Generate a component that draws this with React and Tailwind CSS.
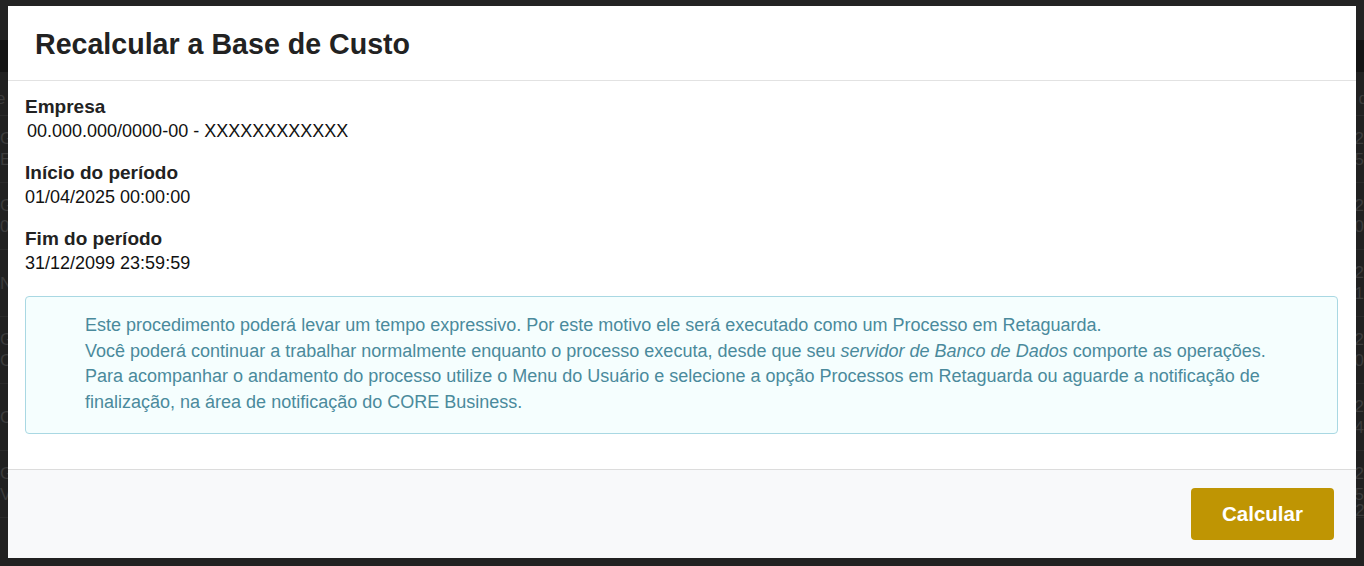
const rows = [
  { a: 'G', b: 'E', r1: '2', r2: '5' },
  { a: 'G', b: '0/', r1: '2', r2: '0' },
  { a: 'N', b: '', r1: '2', r2: '1' },
  { a: 'G', b: 'C', r1: '2', r2: '0' },
  { a: 'C', b: '', r1: '2', r2: '4' },
  { a: 'G', b: 'V', r1: '2', r2: '5' },
];

function BackgroundPage() {
  return (
    <div className="flex flex-col h-full text-[#3c3c3c] text-[17px]">
      <div className="h-[40px] bg-[#232323]" />
      <div className="h-[32px] bg-[#141414]" />
      <div className="h-[44px] flex items-end justify-between pb-1 border-b border-[#2c2c2c]">
        <span className="-ml-1">e</span>
        <span className="-mr-1">d</span>
      </div>
      {rows.map((r, i) => (
        <div key={i} className="h-[67px] flex justify-between items-center border-b border-[#2a2a2a] leading-[21px]">
          <div className="flex flex-col">
            <span>{r.a}</span>
            <span>{r.b}</span>
          </div>
          <div className="flex flex-col">
            <span>{r.r1}</span>
            <span>{r.r2}</span>
          </div>
        </div>
      ))}
      <div className="relative h-[20px]">
        <span className="absolute left-[145px] top-[-20px]">01/04/2025</span>
        <span className="absolute left-[275px] top-[-20px]">31/12/2099</span>
        <span className="absolute left-[1075px] top-[-20px]">17/04/2025</span>
        <span className="absolute left-[1308px] top-[-20px]">17/04/2</span>
      </div>
    </div>
  );
}

function Field({ label, value, indent }) {
  return (
    <div className="flex flex-col">
      <span className="text-[19px] font-bold leading-[25px] text-[#222]">{label}</span>
      <span className={`text-[18px] leading-[25px] text-[#111] ${indent ? 'pl-[2px]' : ''}`}>{value}</span>
    </div>
  );
}

export default function App() {
  return (
    <div
      className="relative w-full h-[566px] overflow-hidden bg-[#212121]"
      style={{ fontFamily: '"Liberation Sans", Arial, sans-serif' }}
    >
      <BackgroundPage />

      <div className="absolute left-[8px] top-[6px] w-[1348px] h-[552px] bg-white flex flex-col">
        <div className="h-[75px] flex items-center px-[27px] border-b border-[#e2e2e2]">
          <h1 className="text-[28.6px] font-bold text-[#222] pt-[2px]">Recalcular a Base de Custo</h1>
        </div>

        <div className="flex-1 flex flex-col pt-[13px] pl-[17px] pr-[18px]">
          <div className="flex flex-col gap-[16px]">
            <Field label="Empresa" value="00.000.000/0000-00 - XXXXXXXXXXXX" indent />
            <Field label="Início do período" value="01/04/2025 00:00:00" />
            <Field label="Fim do período" value="31/12/2099 23:59:59" />
          </div>

          <div className="mt-[20px] border border-[#a9d8e3] bg-[#f5fefe] rounded-[4px] pl-[59px] pr-[40px] pt-[16px] pb-[17px] text-[18px] leading-[25.7px] text-[#4a8a9c]">
            Este procedimento poderá levar um tempo expressivo. Por este motivo ele será executado como um Processo em Retaguarda.
            <br />
            Você poderá continuar a trabalhar normalmente enquanto o processo executa, desde que seu{' '}
            <i>servidor de Banco de Dados</i> comporte as operações.
            <br />
            Para acompanhar o andamento do processo utilize o Menu do Usuário e selecione a opção Processos em Retaguarda ou aguarde a notificação de finalização, na área de notificação do CORE Business.
          </div>
        </div>

        <div className="h-[89px] bg-[#f8f9fa] border-t border-[#dcdcdc] flex items-center justify-end pr-[22px]">
          <button className="h-[52px] w-[143px] rounded-[4px] bg-[#bf9503] text-white text-[20.5px] font-bold">
            Calcular
          </button>
        </div>
      </div>
    </div>
  );
}
